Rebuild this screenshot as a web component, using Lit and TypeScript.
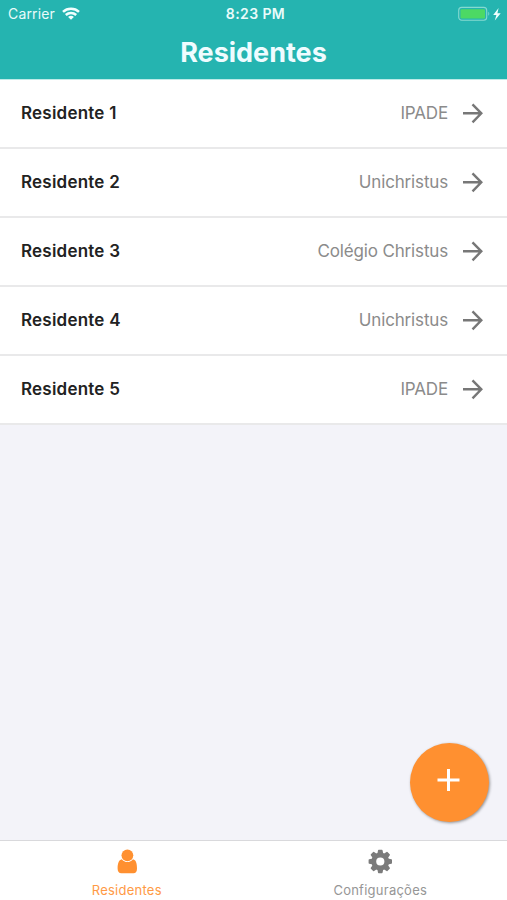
import { LitElement, html, css, svg } from "lit";
import { customElement, property } from "lit/decorators.js";

const residents = [
  { name: "Residente 1", place: "IPADE" },
  { name: "Residente 2", place: "Unichristus" },
  { name: "Residente 3", place: "Colégio Christus" },
  { name: "Residente 4", place: "Unichristus" },
  { name: "Residente 5", place: "IPADE" },
];

const teeth = [0, 45, 90, 135, 180, 225, 270, 315];

@customElement("status-bar")
class StatusBar extends LitElement {
  static styles = css`
    :host {
      display: grid;
      grid-template-columns: 1fr auto 1fr;
      align-items: center;
      height: 27px;
      padding: 0 4px 0 8px;
      color: #e9fbfa;
      font-size: 14px;
      line-height: 17px;
    }
    .side { display: flex; align-items: center; }
    .carrier { letter-spacing: 0.15px; }
    .wifi { margin: -1px 0 0 7px; }
    .time { font-weight: 600; letter-spacing: 0.4px; }
    .end { justify-content: flex-end; }
    svg { display: block; }
  `;
  render() {
    return html`
      <div class="side">
        <span class="carrier">Carrier</span>
        <svg class="wifi" width="18" height="13" viewBox="0 0 18 13" fill="none" stroke="#f2fffe" stroke-width="2.5">
          <path d="M1 4.900C5.400.8 12.600.8 17 4.900" />
          <path d="M3.800 8C6.800 5.300 11.200 5.300 14.200 8" />
          <path d="M9 12.800L6.100 9.900C7.800 8.500 10.200 8.500 11.900 9.900Z" fill="#f2fffe" stroke="none" />
        </svg>
      </div>
      <span class="time">8:23 PM</span>
      <div class="side end">
        <svg width="45" height="16" viewBox="0 0 45 16">
          <rect x="0.700" y="1.400" width="28" height="12.800" rx="3" fill="none" stroke="#85d9d0" stroke-width="1.100" />
          <rect x="2.500" y="3.200" width="24.500" height="9.300" rx="1.200" fill="#4cd964" />
          <path d="M30.300 5.700c1.300.5 1.300 3.600 0 4.100z" fill="#85d9d0" />
          <path d="M40.600 1.900L35.200 8.900h3.200l-1.600 5.700L42.700 7.200h-3.300z" fill="#f2fffe" />
        </svg>
      </div>
    `;
  }
}

@customElement("resident-row")
class ResidentRow extends LitElement {
  @property() name = "";
  @property() place = "";
  static styles = css`
    :host {
      box-sizing: border-box;
      display: flex;
      align-items: center;
      height: 69px;
      padding: 0 23px 1px 21px;
      background: #fff;
      border-bottom: 2px solid #e9e9ea;
    }
    .name { flex: 1; font-size: 17px; font-weight: 600; color: #222; letter-spacing: 0.22px; }
    .place { font-size: 17px; color: #8b8b8b; letter-spacing: -0.16px; }
    svg { display: block; margin-left: 13px; }
  `;
  render() {
    return html`
      <span class="name">${this.name}</span>
      <span class="place">${this.place}</span>
      <svg width="23" height="22" viewBox="0 0 23 22" fill="none" stroke="#777" stroke-width="2.400">
        <path d="M2 11.300H20.500M11.500 2.300L20.300 11.300L11.500 20.300" />
      </svg>
    `;
  }
}

@customElement("app-root")
class AppRoot extends LitElement {
  static styles = css`
    :host {
      position: relative;
      display: flex;
      flex-direction: column;
      height: 900px;
      overflow: hidden;
      background: #f3f3f9;
      font-family: Inter, "Liberation Sans", sans-serif;
    }
    header {
      box-sizing: border-box;
      height: 80px;
      background: #25b4b0;
      border-bottom: 1px solid #bdebe8;
    }
    h1 {
      margin: 0;
      text-align: center;
      font-size: 27px;
      line-height: 52px;
      font-weight: 700;
      color: #effcff;
    }
    main { flex: 1; }
    .add {
      position: absolute;
      right: 18px;
      bottom: 78px;
      box-sizing: border-box;
      width: 79px;
      height: 79px;
      padding: 0 3px 5px 0;
      border: 0;
      border-radius: 50%;
      background: #ff9030;
      box-shadow: 1px 1px 3px rgba(0, 0, 0, 0.4);
      display: grid;
      place-items: center;
    }
    nav {
      box-sizing: border-box;
      display: grid;
      grid-template-columns: 1fr 1fr;
      height: 60px;
      background: #fff;
      border-top: 1px solid #d9d9dc;
    }
    .tab {
      display: flex;
      flex-direction: column;
      align-items: center;
      padding-top: 8px;
      gap: 7px;
      color: #969696;
      font-size: 13px;
      line-height: 18px;
      letter-spacing: 0.25px;
    }
    .active { color: #ff9a45; }
    svg { display: block; }
  `;
  render() {
    return html`
      <header>
        <status-bar></status-bar>
        <h1>Residentes</h1>
      </header>
      <main>
        ${residents.map((r) => html`<resident-row .name=${r.name} .place=${r.place}></resident-row>`)}
      </main>
      <button class="add" aria-label="Adicionar">
        <svg width="24" height="24" viewBox="0 0 24 24" fill="none" stroke="#fff" stroke-width="3">
          <path d="M12.500 1V23M1.500 12H23.500" />
        </svg>
      </button>
      <nav>
        <div class="tab active">
          <svg width="20" height="25" viewBox="-0.400 0 20 25" fill="#ff9030">
            <circle cx="10" cy="6.300" r="5.900" />
            <path d="M4.400 10.200C1.400 11 .2 14 .2 19.500C.2 22.500 1.500 24.300 4 24.300H16C18.500 24.300 19.600 22.500 19.600 19.500C19.600 14 18.600 11 15.600 10.200C14.200 12 12.200 13.100 10 13.100S5.800 12 4.400 10.200Z" />
          </svg>
          <span>Residentes</span>
        </div>
        <div class="tab">
          <svg width="24" height="25" viewBox="-12.300 -12.500 24 25" fill="#7b7b7b">
            <circle r="6.500" fill="none" stroke="#7b7b7b" stroke-width="4.800" />
            ${teeth.map((a) => svg`<path d="M-3 -7.500L-2.300 -11.100Q-2.200 -11.700 -1.600 -11.700H1.600Q2.200 -11.700 2.300 -11.100L3 -7.500Z" transform=${`rotate(${a})`} />`)}
          </svg>
          <span>Configurações</span>
        </div>
      </nav>
    `;
  }
}
